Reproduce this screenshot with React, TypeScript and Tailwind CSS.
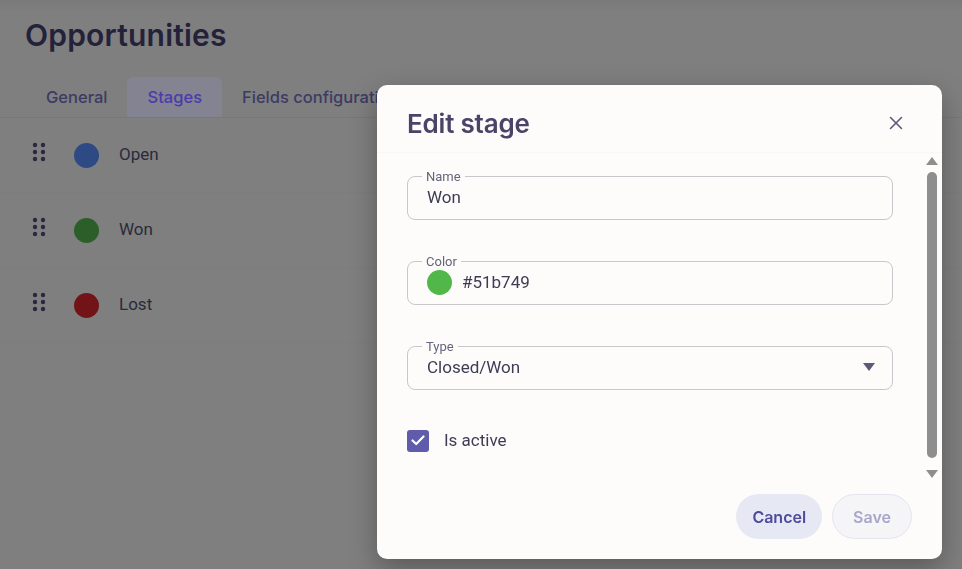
import { X } from 'lucide-react';

type Stage = { name: string; color: string };

const STAGES: Stage[] = [
  { name: 'Open', color: '#2d4a85' },
  { name: 'Won', color: '#2c5e29' },
  { name: 'Lost', color: '#721417' },
];

const TABS = ['General', 'Stages', 'Fields configuration', 'Automations'];

function DragHandle() {
  return (
    <svg width="14" height="20" viewBox="0 0 14 20" className="shrink-0">
      {[3, 10, 17].map((cy) =>
        [3, 11].map((cx) => <circle key={`${cx}-${cy}`} cx={cx} cy={cy} r="2.2" fill="#2a2840" />),
      )}
    </svg>
  );
}

function OutlinedField({ label, children }: { label: string; children: React.ReactNode }) {
  return (
    <fieldset className="rounded-lg border border-[#c8c7cc] px-[19px] pb-[11px] pt-[3px]">
      <legend className="ml-[-5px] px-[4px] text-[13px] leading-[13px] text-[#66647c]">{label}</legend>
      {children}
    </fieldset>
  );
}

function ScrollBar() {
  return (
    <div className="flex w-[14px] shrink-0 flex-col items-center pt-[4px]">
      <svg width="12" height="8" viewBox="0 0 12 8">
        <path d="M6 0 L12 8 L0 8 Z" fill="#8e8e8e" />
      </svg>
      <div className="mt-[7px] h-[286px] w-[10px] rounded-full bg-[#8e8e8e]" />
      <svg width="12" height="8" viewBox="0 0 12 8" className="mt-[12px]">
        <path d="M0 0 L12 0 L6 8 Z" fill="#8e8e8e" />
      </svg>
    </div>
  );
}

function EditStageDialog() {
  return (
    <div className="fixed left-[377px] top-[85px] flex h-[474px] w-[565px] flex-col rounded-[10px] bg-[#fdfcfb] shadow-[0_10px_28px_rgba(0,0,0,0.3)]">
      <div className="flex h-[67px] shrink-0 items-center justify-between pl-[30px] pr-[35px] pt-[9px]">
        <h2 className="font-['Inter',sans-serif] text-[26px] font-semibold tracking-[-0.2px] text-[#4a4568]">
          Edit stage
        </h2>
        <X className="h-[22px] w-[22px] text-[#5a5878]" strokeWidth={1.7} />
      </div>

      <div className="flex h-[334px] shrink-0 border-t border-[#f8f7f5]">
        <div className="flex flex-1 flex-col gap-[35px] pl-[30px] pr-[32px] pt-[17px] font-['Roboto',sans-serif]">
          <OutlinedField label="Name">
            <div className="h-[22px] text-[17px] leading-[22px] text-[#3e3c55]">Won</div>
          </OutlinedField>
          <OutlinedField label="Color">
            <div className="flex h-[22px] items-center gap-[10px]">
              <span className="h-[25px] w-[25px] shrink-0 rounded-full bg-[#51b749]" />
              <span className="text-[17px] leading-[22px] text-[#3e3c55]">#51b749</span>
            </div>
          </OutlinedField>
          <OutlinedField label="Type">
            <div className="flex h-[22px] items-center justify-between">
              <span className="text-[17px] leading-[22px] text-[#3e3c55]">Closed/Won</span>
              <svg width="12" height="8" viewBox="0 0 12 8" className="mr-[-2px]">
                <path d="M0 0 L12 0 L6 8 Z" fill="#5c5a78" />
              </svg>
            </div>
          </OutlinedField>
          <label className="mt-[3px] flex items-center gap-[15px]">
            <span className="flex h-[22px] w-[22px] items-center justify-center rounded-[3px] bg-[#5e5cab]">
              <svg width="14" height="11" viewBox="0 0 14 11">
                <path d="M1.5 5.5 L5.2 9 L12.5 1.5" fill="none" stroke="#ffffff" strokeWidth="2.2" strokeLinecap="round" strokeLinejoin="round" />
              </svg>
            </span>
            <span className="text-[17px] text-[#3e3c55]">Is active</span>
          </label>
        </div>
        <div className="mr-[3px] flex">
          <ScrollBar />
        </div>
      </div>

      <div className="flex flex-1 items-center justify-end gap-[10px] pb-[12px] pr-[30px] font-['Inter',sans-serif]">
        <button
          type="button"
          className="h-[45px] rounded-full bg-[#e6e8f3] px-[16px] text-[16px] font-semibold text-[#4e4b9d]"
        >
          Cancel
        </button>
        <button
          type="button"
          className="h-[45px] rounded-full border border-[#e4e4ee] bg-[#f5f5f8] px-[20px] text-[16px] font-semibold text-[#a8a6c8]"
        >
          Save
        </button>
      </div>
    </div>
  );
}

export default function App() {
  return (
    <div className="relative h-[569px] w-[962px] overflow-hidden bg-[#7f7f7f] font-['Roboto',sans-serif]">
      <div className="h-[12px] bg-gradient-to-b from-[#797979] to-[#7f7f7f]" />
      <h1 className="mt-[6px] pl-[25px] font-['Inter',sans-serif] text-[30px] font-semibold leading-[34px] tracking-[0.2px] text-[#24223a]">
        Opportunities
      </h1>
      <div className="mt-[25px] flex border-b border-[#787878] pl-[26px] font-['Inter',sans-serif]">
        {TABS.map((t) => (
          <div
            key={t}
            className={`flex h-[40px] items-center whitespace-nowrap rounded-t-[6px] px-[20px] text-[16.5px] font-medium ${
              t === 'Stages' ? 'bg-[#838391] text-[#4a3caa]' : 'text-[#3c3b63]'
            }`}
          >
            {t}
          </div>
        ))}
      </div>
      <div className="flex flex-col">
        {STAGES.map((s) => (
          <div key={s.name} className="flex h-[75px] items-center border-b border-[#7d7d7d] pl-[32px]">
            <div className="mt-[-6px]">
              <DragHandle />
            </div>
            <span className="ml-[28px] h-[25px] w-[25px] shrink-0 rounded-full" style={{ backgroundColor: s.color }} />
            <span className="ml-[20px] text-[17px] text-[#2b2a3a]">{s.name}</span>
          </div>
        ))}
      </div>
      <EditStageDialog />
    </div>
  );
}
